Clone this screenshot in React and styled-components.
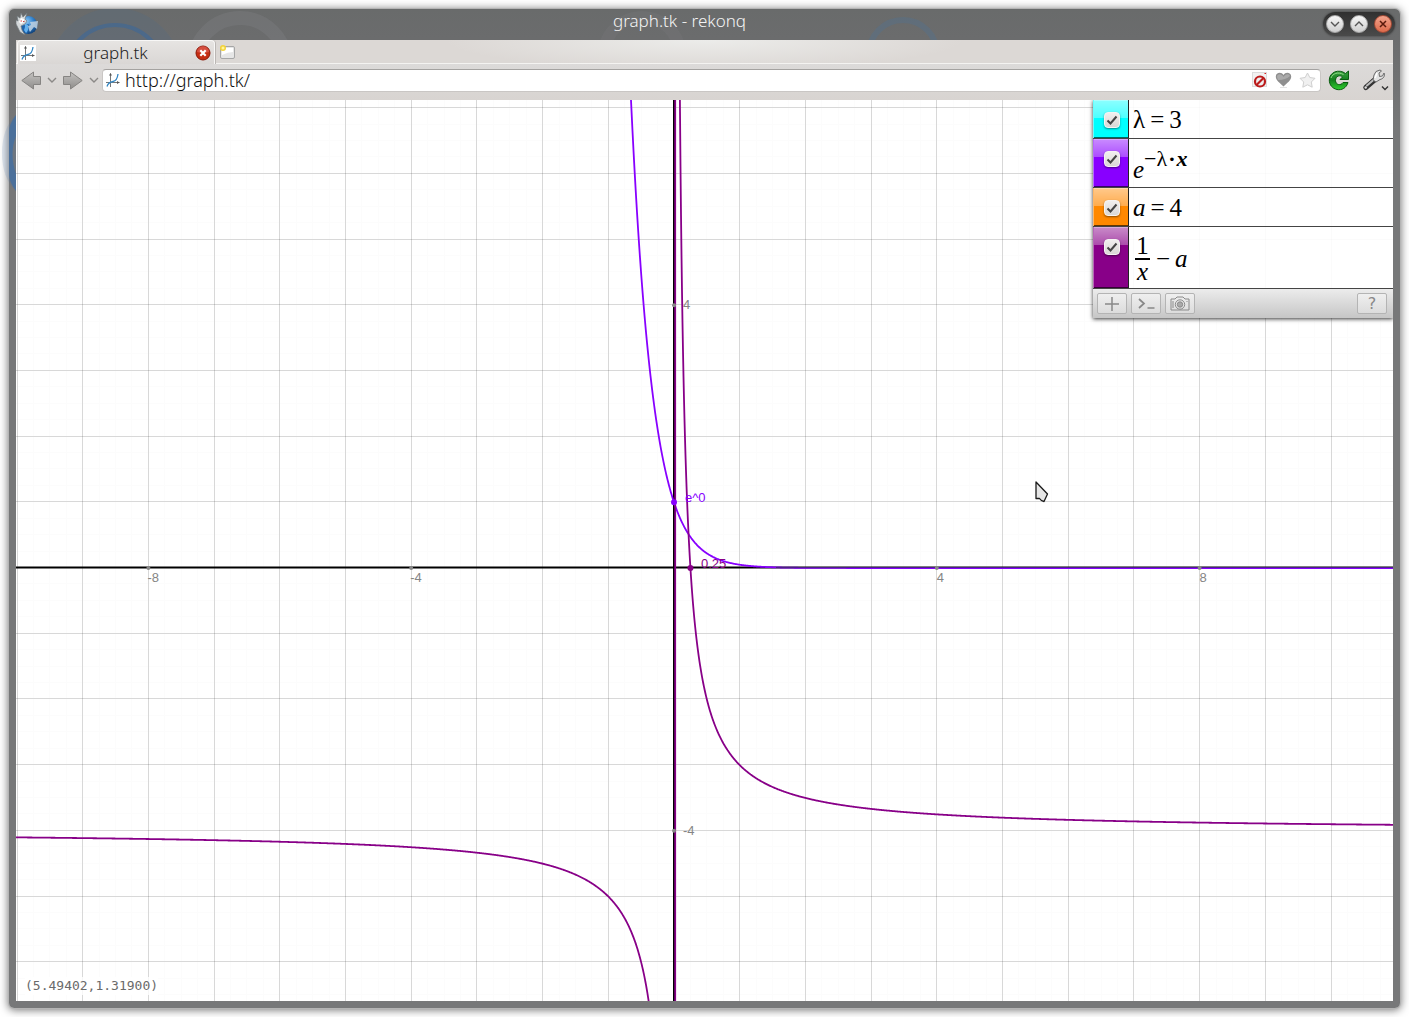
import React from "react";
import styled, { createGlobalStyle } from "styled-components";

const GlobalStyle = createGlobalStyle`
  *, *::before, *::after {
    box-sizing: border-box;
  }

  body {
    margin: 0;
    background: #fff;
    font-family: "Noto Sans", "Open Sans", sans-serif;
  }
`;

const Desktop = styled.div`
  position: relative;
  display: flex;
  min-height: 100vh;
  padding: 9px;
  overflow: hidden;
`;

const Window = styled.main`
  flex: 1;
  display: flex;
  flex-direction: column;
  min-width: 0;
  padding: 0 7px 7px;
  background: linear-gradient(#696b6b, #6b6c6d 30px, #777879 120px);
  border-radius: 5px;
  box-shadow: 0 0 0 1px #b4b4b4, 0 1px 8px 1px rgba(0, 0, 0, 0.55);
`;

/* wallpaper rings that show through the window frame */
const Wallpaper = styled.svg`
  position: absolute;
  top: 0;
  left: 0;
  pointer-events: none;
`;

const TitleBar = styled.header`
  display: grid;
  grid-template-columns: 26px 1fr 76px;
  align-items: center;
  height: 31px;
  position: relative;
`;

const Title = styled.h1`
  margin: 0 0 8px;
  color: #f4f4f4;
  font-size: 17px;
  font-weight: 300;
  line-height: 20px;
  text-align: center;
`;

const WindowButtons = styled.div`
  display: flex;
  gap: 6px;
  justify-self: end;
  margin: 0 -2px 2px 0;
  padding: 3px;
  border-radius: 12px;
  background: linear-gradient(#303030, #4a4a4a);
  box-shadow: 0 0 2px #333;
`;

const RoundButton = styled.button`
  display: grid;
  place-items: center;
  width: 18px;
  height: 18px;
  padding: 0;
  border: 1px solid ${(props) => (props.$close ? "#a34a35" : "#a9a9a9")};
  border-radius: 50%;
  background: ${(props) =>
    props.$close
      ? "linear-gradient(#f2a38c, #dd6a4b)"
      : "linear-gradient(#f6f6f6, #cfcfcf)"};
`;

const Client = styled.div`
  position: relative;
  flex: 1;
  display: flex;
  flex-direction: column;
  background: #dad6d3;
`;

const TabStrip = styled.div`
  display: flex;
  align-items: center;
  height: 24px;
  border-bottom: 1px solid #f4f3f1;
  background: radial-gradient(ellipse 260px 30px at 50% 0, #ececea, transparent), #dcd8d5;
`;

const Tab = styled.div`
  display: flex;
  align-items: center;
  width: 198px;
  height: 24px;
  margin-left: 1px;
  padding: 2px 3px 0 2px;
  border: 1px solid #f8f7f6;
  border-bottom: 0;
  border-radius: 4px 4px 0 0;
  background: linear-gradient(#e6e4e2, #dad7d5);
  box-shadow: 1px 0 0 #bbb7b4;
`;

const TabTitle = styled.span`
  flex: 1;
  color: #222;
  font-size: 17px;
  font-weight: 300;
  line-height: 20px;
  text-align: center;
`;

const IconButton = styled.button`
  display: flex;
  align-items: center;
  padding: 0;
  border: 0;
  background: none;
`;

const NewTabButton = styled(IconButton)`
  margin-left: 4px;
`;

const ReloadButton = styled(IconButton)`
  margin-right: 6px;
`;

const NavBar = styled.div`
  display: flex;
  align-items: center;
  gap: 6px;
  height: 36px;
  padding: 0 4px 4px 5px;
  background: linear-gradient(#dcdad9, #d8d4d1);
`;

const AddressBar = styled.form`
  flex: 1;
  display: flex;
  align-items: center;
  gap: 7px;
  min-width: 0;
  height: 23px;
  margin: 0 1px 0 -3px;
  padding: 0 4px 0 2px;
  border: 1px solid #c9c6c4;
  border-top-color: #a4a2a0;
  border-radius: 4px;
  background: #fff;
`;

const AddressInput = styled.input`
  flex: 1;
  min-width: 0;
  height: 21px;
  margin-left: -3px;
  padding: 0;
  border: 0;
  outline: 0;
  background: none;
  color: #111;
  font-family: inherit;
  font-size: 18px;
  font-weight: 300;
`;

const GraphPage = styled.div`
  position: relative;
  flex: 1;
  display: flex;
  min-height: 400px;
  background: #fff;
  overflow: hidden;
`;

const Plot = styled.svg`
  position: absolute;
  width: 100%;
  height: 100%;
`;

const AxisLabel = styled.text`
  fill: #858585;
  font-family: "Liberation Sans", sans-serif;
  font-size: 13px;
`;

const PointLabel = styled(AxisLabel)`
  fill: ${(props) => props.$color};
`;

const Coordinates = styled.output`
  position: absolute;
  left: 9px;
  bottom: 6px;
  color: #6a6a6a;
  background: rgba(255, 255, 255, 0.8);
  font-family: "DejaVu Sans Mono", monospace;
  font-size: 13px;
  line-height: 18px;
`;

const Panel = styled.section`
  position: absolute;
  top: 0;
  right: 0;
  width: 300px;
  box-shadow: 0 1px 4px rgba(0, 0, 0, 0.8);
`;

const EquationList = styled.ul`
  margin: 0;
  padding: 0;
  list-style: none;
`;

const EquationRow = styled.li`
  display: flex;
  height: ${(props) => props.$height}px;
  border-bottom: 1px solid #444;
  background: rgba(255, 255, 255, 0.88);
`;

const Swatch = styled.div`
  display: grid;
  justify-items: center;
  align-content: start;
  width: 36px;
  padding: 12px 0 0 2px;
  border-right: 1px solid #222;
  border-left: 1px solid rgba(255, 255, 255, 0.4);
  box-shadow: inset 0 -1px 0 rgba(0, 0, 0, 0.6), inset 0 1px 0 rgba(255, 255, 255, 0.3);
  background:
    linear-gradient(rgba(255, 255, 255, 0.55), rgba(255, 255, 255, 0.3)) 0 0 / 100% 18px no-repeat,
    ${(props) => props.$color};
`;

const Check = styled.input`
  grid-area: 1 / 1;
  appearance: none;
  width: 16px;
  height: 16px;
  margin: 0;
  border: 1px solid #f5f3f2;
  border-radius: 4px;
  background: linear-gradient(#f1efee, #dad7d5);
  box-shadow: 0 1px 2px rgba(0, 0, 0, 0.45);

  & + svg {
    grid-area: 1 / 1;
    visibility: hidden;
    pointer-events: none;
  }

  &:checked + svg {
    visibility: visible;
  }
`;

const Formula = styled.label`
  flex: 1;
  display: flex;
  align-items: center;
  gap: 5px;
  padding: 2px 0 0 4px;
  color: #000;
  font-family: "Liberation Serif", serif;
  font-size: 25px;
  line-height: 24px;
`;

const Exponent = styled.sup`
  align-self: flex-start;
  margin: 6px 0 0 -5px;
  font-size: 22px;
  line-height: 24px;

  & > b {
    padding: 0 1px;
  }

  & > i {
    font-weight: bold;
  }
`;

const Base = styled.i`
  align-self: flex-end;
  margin-bottom: 5px;
`;

const Fraction = styled.span`
  display: flex;
  flex-direction: column;
  align-items: center;
  width: 15px;
  margin: 0 1px 0 2px;

  & > :first-child {
    border-bottom: 2px solid #000;
    width: 15px;
    text-align: center;
  }
`;

const PanelFooter = styled.footer`
  display: flex;
  align-items: center;
  gap: 4px;
  height: 29px;
  padding: 0 6px 0 4px;
  background: linear-gradient(#ececec, #c6c6c6);
`;

const ToolButton = styled.button`
  display: grid;
  place-items: center;
  width: 30px;
  height: 21px;
  padding: 0;
  border: 1px solid #b4b4b4;
  border-radius: 2px;
  background: linear-gradient(#efefef, #dcdcdc);
  color: #888;
  font-family: "DejaVu Sans", sans-serif;
  font-size: 16px;
  line-height: 19px;

  &:last-child {
    margin-left: auto;
  }
`;

const UNIT = 65.7;
const ORIGIN = { x: 658, y: 468 };
const WIDTH = 1377;
const HEIGHT = 901;

const toX = (x) => ORIGIN.x + x * UNIT;
const toY = (y) => ORIGIN.y - y * UNIT;

const tracePath = (fn, from, to) => {
  const points = [];
  for (let px = from; px <= to; px += 0.5) {
    const y = toY(fn((px - ORIGIN.x) / UNIT));
    if (y > -400 && y < HEIGHT + 400) {
      points.push(`${px.toFixed(1)},${y.toFixed(2)}`);
    }
  }
  return "M" + points.join("L");
};

const range = (from, to, step) => {
  const list = [];
  for (let i = from; i <= to; i += step) list.push(i);
  return list;
};

const gridPath = (step) =>
  range(-12, 12, step)
    .map((n) => {
      const x = Math.floor(toX(n)) + 0.5;
      const y = Math.round(toY(n)) - 0.5;
      return `M${x} 0V${HEIGHT}M0 ${y}H${WIDTH}`;
    })
    .join("");

const GraphPlot = () => (
  <Plot viewBox={`0 0 ${WIDTH} ${HEIGHT}`} preserveAspectRatio="xMidYMid slice">
    <path d={gridPath(0.25)} stroke="#fcfcfc" />
    <path d={gridPath(1)} stroke="#000" strokeOpacity="0.14" />
    <path d={`M658 0V${HEIGHT}M0 467.5H${WIDTH}`} stroke="#000" strokeWidth="2" />
    {[-8, -4, 4, 8].map((n) => (
      <g key={n}>
        <AxisLabel x={toX(n) + (n < 0 ? -1 : 0)} y="482">{n}</AxisLabel>
      </g>
    ))}
    <g fill="none" strokeWidth="1.8">
      <path d={tracePath((x) => Math.exp(-3 * x), 560, WIDTH)} stroke="#8800ff" />
      <path d={`M659.2 0V${HEIGHT}`} stroke="#880088" />
      <path d={tracePath((x) => 1 / x - 4, 0, ORIGIN.x - 1)} stroke="#880088" />
      <path d={tracePath((x) => 1 / x - 4, ORIGIN.x + 1, WIDTH)} stroke="#880088" />
    </g>
    <path d={`M760 467.5H${WIDTH}`} stroke="#4c1c8a" strokeWidth="1" />
    {[-8, -4, 4, 8].map((n) => (
      <circle key={n} cx={toX(n)} cy={ORIGIN.y} r="2" fill="#888" />
    ))}
    {[-4, 4].map((n) => (
      <g key={n}>
        <circle cx={ORIGIN.x} cy={toY(n)} r="2" fill="#888" />
        <AxisLabel x="667" y={toY(n) + 4}>{n}</AxisLabel>
      </g>
    ))}
    <circle cx={ORIGIN.x} cy={toY(1)} r="3" fill="#8800ff" />
    <PointLabel x="669" y="402" $color="#8800ff">e^0</PointLabel>
    <circle cx={toX(0.25)} cy={ORIGIN.y} r="3" fill="#880088" />
    <PointLabel x="685" y="468" $color="#880088">0.25</PointLabel>
    {/* mouse pointer */}
    <path
      d="M1020 382L1031.500 394L1028 401.500Q1025 401 1023.500 398.500L1020 398.500Z"
      fill="#e6e6e6"
      stroke="#1a1a1a"
      strokeWidth="1.300"
      strokeLinejoin="round"
    />
  </Plot>
);

const Favicon = ({ boxed }) => (
  <svg width="16" height="16" viewBox="0 0 16 16" fill="none">
    {boxed && <rect width="16" height="16" fill="#fff" />}
    <path d="M5.500 1.500V15M1 10.500H14.500" stroke="#777" />
    <path d="M4 3.500L5.500 1L7 3.500ZM12 9L14.500 10.500L12 12Z" fill="#555" />
    <path d="M2 14.500C3 11 5 10 8 9.500C11 9 12.500 6 13 2" stroke="#3487c4" strokeWidth="1.300" />
  </svg>
);

const Chevron = ({ up, color = "#8b8987", size = 10 }) => (
  <svg width={size} height={size} viewBox="0 0 10 10" fill="none">
    <path d={up ? "M1 7L5 3L9 7" : "M1 3L5 7L9 3"} stroke={color} strokeWidth="1.400" />
  </svg>
);

const Arrow = ({ flip }) => (
  <svg width="20" height="20" viewBox="0 0 20 20">
    <defs>
      <linearGradient id="arrowFill" x1="0" y1="0" x2="0" y2="1">
        <stop offset="0" stopColor="#c4c2c0" />
        <stop offset="1" stopColor="#8f8d8b" />
      </linearGradient>
    </defs>
    <path
      d="M.8 10.500L12.500 2V6.500H19.500V14.500H12.500V19Z"
      transform={flip ? "translate(20 0) scale(-1 1)" : undefined}
      fill="url(#arrowFill)"
      stroke="#868482"
    />
  </svg>
);

const RekonqLogo = () => (
  <svg width="26" height="26" viewBox="0 0 26 26">
    <defs>
      <radialGradient id="globe" cx=".4" cy=".3" r=".75">
        <stop offset="0" stopColor="#8cc8f5" />
        <stop offset=".5" stopColor="#2f7fcb" />
        <stop offset="1" stopColor="#0c3a70" />
      </radialGradient>
    </defs>
    <circle cx="12.500" cy="13" r="9" fill="url(#globe)" />
    <path d="M12 12Q15 13 13 17L11 22Q6 20 5 14Z" fill="#1c62ab" />
    <path d="M8 18Q10 14 8 11L12 13Q13 18 10 21Z" fill="#63b1ee" />
    <path
      d="M0 8L0 12L2 16L4 20L9 23L6 18L5 14L9 12L11 9L9 7L11 1L7 5L5 1L4 6L1 4L2 9Z"
      fill="#d4d8da"
      stroke="#70787d"
      strokeWidth=".7"
    />
    <path d="M5 6L8 7L8 10L5 12L3 10Z" fill="#fff" />
    <path d="M12 14L15 13L14 10L22 9L21 17L18 15L14 20L13 18Z" fill="#c3d4e2" opacity=".85" />
    <path d="M4.500 9H6M7 9.500H8.500" stroke="#c44" />
  </svg>
);

const CloseTabIcon = () => (
  <svg width="16" height="16" viewBox="0 0 16 16">
    <circle cx="8" cy="8" r="7" fill="#c42d12" stroke="#8c1808" />
    <path d="M2 7A6 6 0 0 1 14 7Q8 9 2 7Z" fill="#e77" opacity=".45" />
    <path d="M5.300 5.300L10.700 10.700M10.700 5.300L5.300 10.700" stroke="#fff" strokeWidth="2.200" />
  </svg>
);

const NewTabIcon = () => (
  <svg width="18" height="18" viewBox="0 0 18 18">
    <rect x="1.500" y="3.500" width="14" height="12" rx="1.500" fill="#e6e6e6" stroke="#a6a6a6" />
    <path d="M3 5H14V9Q9 9 3 12Z" fill="#fff" />
    <circle cx="4" cy="5" r="3" fill="#f4d33a" />
    <circle cx="4" cy="5" r="1.500" fill="#fff59a" />
  </svg>
);

const BlockIcon = () => (
  <svg width="17" height="17" viewBox="0 0 17 17" fill="none">
    <rect x="1.500" y=".5" width="14" height="14" fill="#f2f2f2" stroke="#dcdcdc" />
    <path d="M13.500 1.500H15" stroke="#d22" />
    <circle cx="9" cy="9.500" r="5" stroke="#bb1c1c" strokeWidth="2.200" fill="#eee" />
    <path d="M5.500 13L12.500 6" stroke="#bb1c1c" strokeWidth="2.200" />
  </svg>
);

const HeartIcon = () => (
  <svg width="17" height="17" viewBox="0 0 17 17">
    <path
      d="M8.500 14.500C5 11 .8 8.500 .8 4.500C.8 .5 6.500 -.5 8.500 3C10.500 -.5 16.200 .5 16.200 4.500C16.200 8.500 12 11 8.500 14.500Z"
      fill="#8f8f8f"
    />
    <path d="M2 5C2 1.500 6.500 1 8.500 5C10 2 14 1 15 4Q11 8 3 8Z" fill="#aaa" />
    <path d="M5 15.500H12" stroke="#e4e4e4" />
  </svg>
);

const StarIcon = () => (
  <svg width="17" height="17" viewBox="0 0 17 17">
    <path
      d="M8.500 1L10.800 5.500L16 6.300L12.300 10L13.200 15.200L8.500 12.800L3.800 15.200L4.700 10L1 6.300L6.200 5.500Z"
      fill="#f0f0f0"
      stroke="#cfcfcf"
      strokeLinejoin="round"
    />
  </svg>
);

const ReloadIcon = () => (
  <svg width="22" height="22" viewBox="0 0 22 22">
    <defs>
      <linearGradient id="reloadFill" x1="0" y1="0" x2="0" y2="1">
        <stop offset="0" stopColor="#3f9f45" />
        <stop offset=".5" stopColor="#12801c" />
        <stop offset="1" stopColor="#2fd02f" />
      </linearGradient>
    </defs>
    <path
      d="M20.500 2V10.500H12L14.500 8C12 5.500 7.500 7 7.500 11.500C7.500 16 13 17 15 13.500H20C18.500 19 13.500 21.500 9 20.500C4.500 19.500 1.300 16 1.300 11C1.300 3 11 -.5 17.500 4.500Z"
      fill="url(#reloadFill)"
      stroke="#0a5c10"
    />
    <path d="M3 9C4.500 4.500 10 2.500 15.500 5.500" stroke="#8fdc85" fill="none" />
  </svg>
);

const WrenchIcon = () => (
  <svg width="27" height="24" viewBox="0 0 27 24" fill="none">
    <path d="M3.800 19.500L12.500 12" stroke="#333" strokeWidth="5" strokeLinecap="round" />
    <path d="M5 17.500L12 11.500" stroke="#bbb" strokeWidth="2" strokeLinecap="round" />
    <circle cx="3.700" cy="19.500" r="1.200" fill="#ddd" />
    <path
      d="M11 12L12 7L14 3.500L18 2L19.500 3L17 5L17.500 8.500L20.500 8L22 5C23.500 8 21 11 18 11.500L14 14Z"
      fill="#e2e2e2"
      stroke="#6a6a6a"
    />
    <path d="M13 10L15 5" stroke="#fff" strokeWidth="1.500" />
    <path d="M20 18.500L23 21.500L26 18.500" stroke="#333" strokeWidth="1.400" />
  </svg>
);

const CameraIcon = () => (
  <svg width="20" height="16" viewBox="0 0 20 16" fill="none" stroke="#8a8a8a">
    <path d="M1 3H5L7 1H13L15 3H19V14H1Z" strokeLinejoin="round" />
    <circle cx="10" cy="8.500" r="4.700" />
    <circle cx="10" cy="8.500" r="2.700" fill="#aaa" />
    <path d="M3 5V12M16.500 5.500H17.500" />
  </svg>
);

const equations = [
  { id: "lambda", color: "#00ffff", height: 39, formula: <>λ<span>=</span>3</> },
  {
    id: "exp",
    color: "#8800ff",
    height: 49,
    formula: <><Base>e</Base><Exponent>−λ<b>·</b><i>x</i></Exponent></>,
  },
  { id: "a", color: "#ff8800", height: 39, formula: <><i>a</i><span>=</span>4</> },
  {
    id: "reciprocal",
    color: "#880088",
    height: 62,
    formula: <><Fraction><span>1</span><i>x</i></Fraction><span>−</span><i>a</i></>,
  },
];

const EquationPanel = () => (
  <Panel>
    <EquationList>
      {equations.map(({ id, color, height, formula }) => (
        <EquationRow key={id} $height={height}>
          <Swatch $color={color}>
            <Check type="checkbox" id={id} defaultChecked />
            <svg width="16" height="16" viewBox="0 0 16 16" fill="none">
              <path d="M3.500 8.500L6.500 11.500L12.500 4.500" stroke="#444" strokeWidth="2" />
            </svg>
          </Swatch>
          <Formula htmlFor={id}>{formula}</Formula>
        </EquationRow>
      ))}
    </EquationList>
    <PanelFooter>
      <ToolButton aria-label="Add equation">
        <svg width="14" height="14" viewBox="0 0 14 14" stroke="#888" strokeWidth="1.500">
          <path d="M7 0V14M0 7H14" />
        </svg>
      </ToolButton>
      <ToolButton aria-label="Console">
        <svg width="17" height="12" viewBox="0 0 17 12" fill="none" stroke="#888" strokeWidth="1.700">
          <path d="M1 1L6 5.500L1 10M9.500 10H16.500" />
        </svg>
      </ToolButton>
      <ToolButton aria-label="Snapshot"><CameraIcon /></ToolButton>
      <ToolButton>?</ToolButton>
    </PanelFooter>
  </Panel>
);

const App = () => (
  <>
    <GlobalStyle />
    <Desktop>
      <Window>
        <Wallpaper width="1000" height="200" viewBox="0 0 1000 200" fill="none">
          <clipPath id="titleClip">
            <rect x="9" y="9" width="991" height="31" />
          </clipPath>
          <g clipPath="url(#titleClip)">
            <circle cx="115" cy="75" r="67" fill="#3d6e9c" fillOpacity=".15" />
            <circle cx="115" cy="75" r="50" stroke="#3c679a" strokeOpacity=".6" strokeWidth="4" />
            <circle cx="240" cy="64" r="46" stroke="#8c8e90" strokeOpacity=".22" strokeWidth="14" />
            <circle cx="642" cy="55" r="38" stroke="#85898d" strokeOpacity=".15" strokeWidth="12" />
            <circle cx="903" cy="54" r="34" stroke="#54708c" strokeOpacity=".45" strokeWidth="6" />
          </g>
          <path d="M16 115Q2 128 2 153Q2 178 16 191Z" fill="#3c6ea6" fillOpacity=".15" />
          <path d="M16 115Q9 124 9 132V174Q9 182 16 191V174Q9 153 16 136Z" fill="#3c6ea6" fillOpacity=".7" />
        </Wallpaper>
        <TitleBar>
          <RekonqLogo />
          <Title>graph.tk - rekonq</Title>
          <WindowButtons>
            <RoundButton aria-label="Minimize"><Chevron color="#555" /></RoundButton>
            <RoundButton aria-label="Maximize"><Chevron up color="#555" /></RoundButton>
            <RoundButton $close aria-label="Close">
              <svg width="8" height="8" viewBox="0 0 8 8" stroke="#5a1a0c" strokeWidth="1.500">
                <path d="M1 1L7 7M7 1L1 7" />
              </svg>
            </RoundButton>
          </WindowButtons>
        </TitleBar>
        <Client>
          <TabStrip>
            <Tab>
              <Favicon boxed />
              <TabTitle>graph.tk</TabTitle>
              <IconButton aria-label="Close tab"><CloseTabIcon /></IconButton>
            </Tab>
            <NewTabButton aria-label="New tab"><NewTabIcon /></NewTabButton>
          </TabStrip>
          <NavBar>
            <IconButton aria-label="Back"><Arrow /></IconButton>
            <IconButton aria-label="Back history"><Chevron /></IconButton>
            <IconButton aria-label="Forward"><Arrow flip /></IconButton>
            <IconButton aria-label="Forward history"><Chevron /></IconButton>
            <AddressBar>
              <Favicon />
              <AddressInput aria-label="Address" defaultValue="http://graph.tk/" />
              <BlockIcon />
              <HeartIcon />
              <StarIcon />
            </AddressBar>
            <ReloadButton aria-label="Reload"><ReloadIcon /></ReloadButton>
            <IconButton aria-label="Settings"><WrenchIcon /></IconButton>
          </NavBar>
          <GraphPage>
            <GraphPlot />
            <Coordinates>(5.49402,1.31900)</Coordinates>
            <EquationPanel />
          </GraphPage>
        </Client>
      </Window>
    </Desktop>
  </>
);

export default App;
